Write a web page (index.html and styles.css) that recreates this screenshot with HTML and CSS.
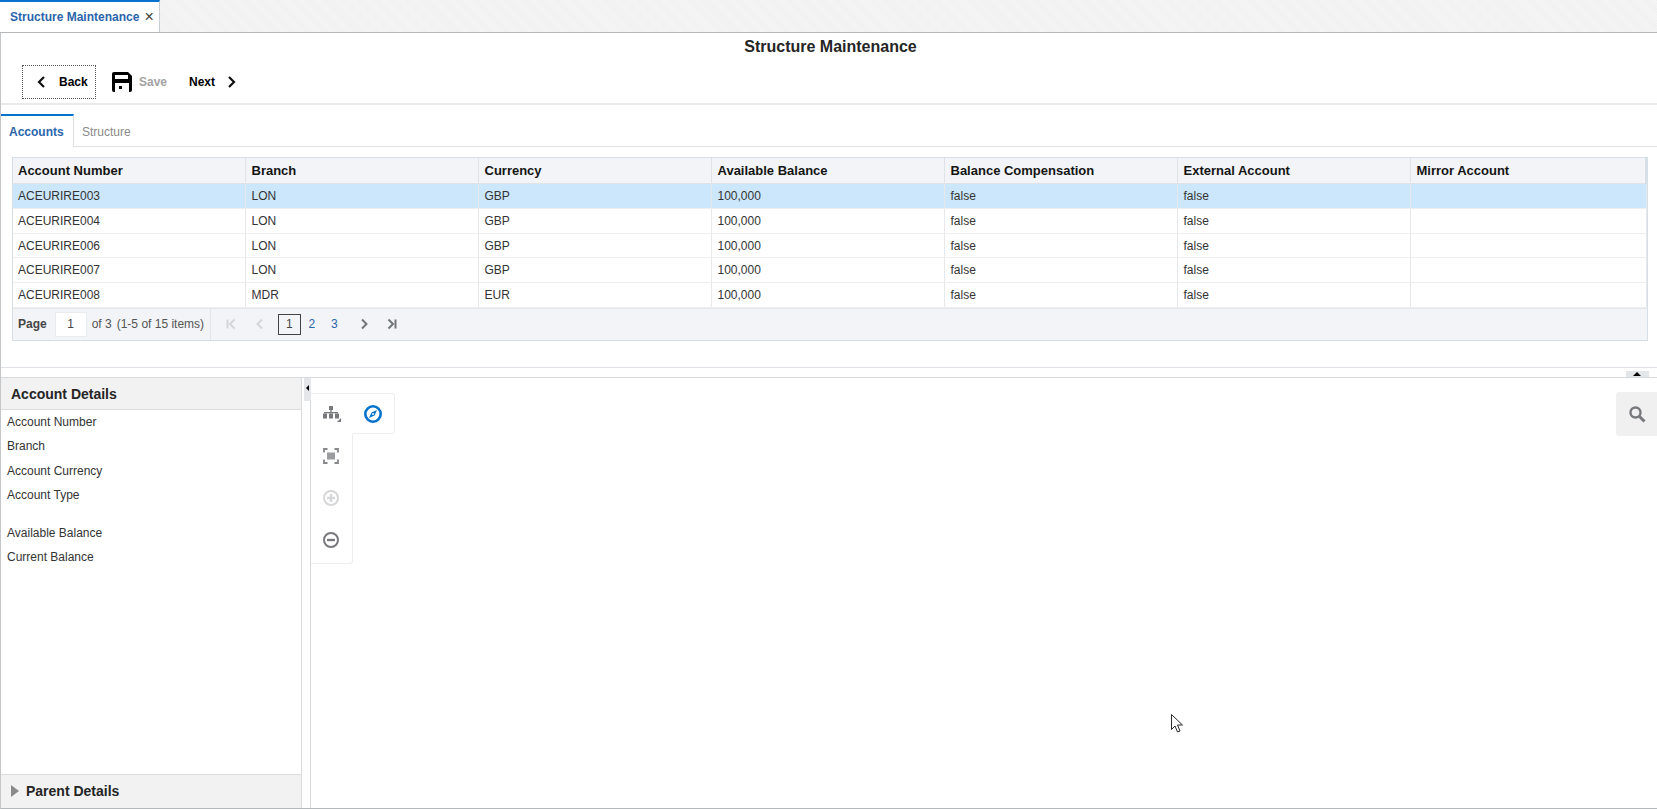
FILE: index.html
```html
<!DOCTYPE html>
<html lang="en">
<head>
<meta charset="utf-8">
<title>Structure Maintenance</title>
<link rel="stylesheet" href="styles.css">
</head>
<body>
<div class="page">
  <header class="tabbar">
    <div class="apptab"><span class="apptab-label">Structure Maintenance</span><span class="apptab-close">×</span></div>
  </header>
  <main class="work">
    <h1 class="title">Structure Maintenance</h1>
    <div class="toolbar">
      <button class="tool tool-back">
        <svg class="chev" viewBox="0 0 10 14"><path d="M8 2 3 7l5 5" /></svg>
        <span>Back</span>
      </button>
      <button class="tool tool-save">
        <svg class="floppy" viewBox="0 0 20 20"><path d="M2 0h14l4 4v14a2 2 0 0 1-2 2H2a2 2 0 0 1-2-2V2a2 2 0 0 1 2-2Z" fill="#000"/><rect x="3" y="3" width="13" height="4" fill="#fff"/><rect x="3" y="11" width="14" height="9" fill="#fff"/><rect x="7" y="14" width="3" height="3" fill="#000"/></svg>
        <span>Save</span>
      </button>
      <button class="tool tool-next">
        <span>Next</span>
        <svg class="chev" viewBox="0 0 10 14"><path d="m2 2 5 5-5 5" /></svg>
      </button>
    </div>
    <nav class="subtabs">
      <div class="subtab active">Accounts</div>
      <div class="subtab">Structure</div>
    </nav>
    <section class="grid-wrap">
      <table class="grid">
        <thead>
          <tr><th>Account Number</th><th>Branch</th><th>Currency</th><th>Available Balance</th><th>Balance Compensation</th><th>External Account</th><th>Mirror Account</th></tr>
        </thead>
        <tbody>
          <tr class="selected"><td>ACEURIRE003</td><td>LON</td><td>GBP</td><td>100,000</td><td>false</td><td>false</td><td></td></tr>
          <tr><td>ACEURIRE004</td><td>LON</td><td>GBP</td><td>100,000</td><td>false</td><td>false</td><td></td></tr>
          <tr class="short"><td>ACEURIRE006</td><td>LON</td><td>GBP</td><td>100,000</td><td>false</td><td>false</td><td></td></tr>
          <tr><td>ACEURIRE007</td><td>LON</td><td>GBP</td><td>100,000</td><td>false</td><td>false</td><td></td></tr>
          <tr><td>ACEURIRE008</td><td>MDR</td><td>EUR</td><td>100,000</td><td>false</td><td>false</td><td></td></tr>
        </tbody>
      </table>
      <div class="pager">
        <div class="pager-info">
          <b>Page</b><span class="page-input">1</span><span>of 3</span><span>(1-5 of 15 items)</span>
        </div>
        <div class="pager-nav">
          <svg class="pg pg-first dim" viewBox="0 0 12 12"><path d="M2.500 1.500v9M9.500 1.500 5 6l4.500 4.500"/></svg>
          <svg class="pg pg-prev dim" viewBox="0 0 12 12"><path d="M8 1.500 3.500 6 8 10.500"/></svg>
          <span class="num current">1</span><span class="num">2</span><span class="num">3</span>
          <svg class="pg pg-next" viewBox="0 0 12 12"><path d="M4 1.500 8.500 6 4 10.500"/></svg>
          <svg class="pg pg-last" viewBox="0 0 12 12"><path d="M2.500 1.500 7 6l-4.500 4.500M9.500 1.500v9"/></svg>
        </div>
      </div>
    </section>
    <div class="hsplit"><span class="hsplit-btn"></span></div>
    <div class="lower">
      <aside class="details">
        <h2 class="details-head">Account Details</h2>
        <div class="details-body">
          <div class="field">Account Number</div>
          <div class="field">Branch</div>
          <div class="field">Account Currency</div>
          <div class="field">Account Type</div>
          <div class="field gap">Available Balance</div>
          <div class="field">Current Balance</div>
        </div>
        <div class="details-foot"><span class="tri"></span>Parent Details</div>
      </aside>
      <div class="vsplit"><span class="vsplit-btn"></span></div>
      <section class="canvas">
        <div class="palette">
          <div class="palette-top">
            <svg class="ic" viewBox="0 0 20 20"><g fill="#77797d"><rect x="8" y="2" width="4" height="4"/><rect x="9.300" y="6" width="1.400" height="2"/><rect x="3" y="8" width="14" height="1.300"/><rect x="2" y="9.500" width="4" height="5"/><rect x="8" y="9.500" width="4" height="5"/><rect x="14" y="9.500" width="4" height="5"/><path d="M20 14v4h-4z"/></g></svg>
            <svg class="ic" viewBox="0 0 20 20"><circle cx="10" cy="10" r="7.700" fill="none" stroke="#0572ce" stroke-width="2.600"/><path d="M14 6 11.500 11.500 6 14 8.500 8.500Z" fill="#0572ce"/><circle cx="10" cy="10" r="1" fill="#fff"/></svg>
          </div>
          <div class="palette-col">
            <svg class="ic" viewBox="0 0 20 20"><path d="M3 6.500V3h3.500M13.500 3H17v3.500M17 13.500V17h-3.500M6.500 17H3v-3.500" fill="none" stroke="#85878b" stroke-width="1.800"/><rect x="6" y="6.500" width="8" height="7" fill="#9a9c9f"/></svg>
            <svg class="ic" viewBox="0 0 20 20"><circle cx="10" cy="10" r="7" fill="none" stroke="#d6d7d9" stroke-width="2"/><path d="M6 10h8M10 6v8" stroke="#d6d7d9" stroke-width="2.400"/></svg>
            <svg class="ic" viewBox="0 0 20 20"><circle cx="10" cy="10" r="7" fill="none" stroke="#77797d" stroke-width="2"/><path d="M6 10h8" stroke="#77797d" stroke-width="2.400"/></svg>
          </div>
        </div>
        <div class="search-btn">
          <svg class="ic" viewBox="0 0 20 20"><circle cx="8.500" cy="8.500" r="5" fill="none" stroke="#77797d" stroke-width="2.400"/><path d="m12.500 12.500 5 5" stroke="#77797d" stroke-width="3"/></svg>
        </div>
        <svg class="cursor" viewBox="0 0 14 22"><path d="M1.500 1.500v15l3.500-3.500 2.500 6 2.500-1-2.500-6h5Z" fill="#fff" stroke="#2b2b2b" stroke-width="1"/></svg>
      </section>
    </div>
  </main>
</div>
</body>
</html>
```

FILE: styles.css
```css
* { box-sizing: border-box; }
html, body { margin: 0; height: 100%; overflow: hidden; background: #fff; }
body { font-family: "Liberation Sans", Arial, sans-serif; font-size: 12px; color: #333; }
.page { width: 1657px; height: 809px; display: flex; flex-direction: column; }

.tabbar { height: 33px; flex: none; display: flex; border-bottom: 1px solid #b5b8ba;
  background: repeating-linear-gradient(45deg, #f5f5f5 0 1px, #f1f1f1 1px 2px); }
.apptab { width: 160px; height: 32px; background: #fff; border-top: 2px solid #0572ce; border-right: 1px solid #c9ced2; display: flex; align-items: center; padding-left: 10px; gap: 5px; }
.apptab-label { font-weight: bold; font-size: 12px; color: #2a65ac; white-space: nowrap; }
.apptab-close { font-size: 16px; color: #444; line-height: 1; }

.work { flex: 1; min-height: 0; display: flex; flex-direction: column; border-left: 1px solid #c4c7c9; border-bottom: 1px solid #b5b8ba; }
.title { margin: 3px 0 0; height: 22px; padding-left: 3px; font-size: 16px; line-height: 21px; font-weight: bold; text-align: center; color: #252525; }
.toolbar { height: 47px; flex: none; display: flex; align-items: flex-start; padding: 7px 0 0 21px; border-bottom: 2px solid #e8eaec; }
.tool { font: bold 12px "Liberation Sans", Arial, sans-serif; background: none; border: 0; padding: 0; display: flex; align-items: center; color: #000; height: 34px; }
.tool-back { width: 74px; border: 1px dotted #555; padding-left: 13px; gap: 13px; }
.tool-save { margin-left: 16px; gap: 7px; color: #a3a3a3; }
.tool-next { margin-left: 22px; gap: 12px; }
.chev { width: 10px; height: 14px; fill: none; stroke: #111; stroke-width: 2.200; }
.floppy { width: 20px; height: 20px; }

.subtabs { margin-top: 9px; height: 33px; flex: none; display: flex; border-bottom: 1px solid #dfe2e5; }
.subtab { padding: 0 8px; font-size: 12px; line-height: 37px; color: #8a8a8a; }
.subtab.active { width: 73px; font-weight: bold; border-top: 2px solid #0572ce; border-right: 1px solid #dfe2e5; height: 33px; line-height: 33px; color: #2a65ac; background: #fff; }

.grid-wrap { margin: 10px 9px 0 11px; height: 184px; flex: none; border: 1px solid #d6dfe6; background: #f2f4f7; display: flex; flex-direction: column; }
.grid { border-collapse: collapse; table-layout: fixed; width: 100%; background: #fff; }
.grid th { height: 25px; width: 233px; padding: 0 0 0 6px; text-align: left; font-size: 13px; font-weight: bold; color: #141414; background: #f2f4f7; border-right: 1px solid #dfe3e8; border-bottom: 1px solid #dfe3e8; }
.grid th:first-child { width: 232px; padding-left: 5px; }
.grid th:last-child { width: auto; border-right: 2px solid #d6dfe6; }
.grid td { height: 25px; padding: 1px 0 0 6px; font-size: 12px; color: #333; border-right: 1px solid #e6e8eb; border-bottom: 1px solid #eceef0; }
.grid td:first-child { padding-left: 5px; }
.grid tr.short td { height: 24px; }
.grid tr.selected td { background: #cce7fb; }
.pager { flex: 1; display: flex; align-items: center; border-top: 1px solid #e4e7ea; font-size: 12px; }
.pager-info { height: 100%; width: 198px; display: flex; align-items: center; padding-left: 5px; border-right: 1px solid #e1e4e8; color: #555; white-space: nowrap; }
.pager-info b { color: #444; }
.page-input { width: 32px; height: 25px; margin: 0 5px 0 8px; background: #fff; border: 1px solid #e9ecef; display: flex; align-items: center; justify-content: center; color: #444; }
.pager-info span:last-child { margin-left: 5px; }
.pager-nav { display: flex; align-items: center; padding-left: 14px; }
.pg { width: 12px; height: 12px; fill: none; stroke: #70757a; stroke-width: 2; }
.pg.dim { stroke: #d3d6d9; }
.pg-prev { margin-left: 17px; }
.num { width: 22.500px; height: 21px; display: flex; align-items: center; justify-content: center; color: #2a65ac; }
.num.current { margin-left: 12px; border: 1px solid #444; color: #444; }
.pg-next { margin-left: 12px; }
.pg-last { margin-left: 16px; }

.hsplit { margin-top: 26px; height: 10px; flex: none; border-top: 1px solid #dfe3e7; display: flex; justify-content: flex-end; padding-right: 8px; }
.hsplit-btn { width: 23px; height: 6px; margin-top: 3px; background: #e3e7ea; position: relative; }
.hsplit-btn::after { content: ""; position: absolute; left: 7px; top: 1px; border: 4px solid transparent; border-top: 0; border-bottom-color: #000; }

.lower { flex: 1; min-height: 0; display: flex; border-top: 1px solid #d6dadd; }
.details { width: 301px; flex: none; display: flex; flex-direction: column; border-right: 1px solid #d9dcdf; }
.details-head { margin: 0; height: 32px; flex: none; padding-left: 10px; font-size: 14px; line-height: 32px; font-weight: bold; color: #252525; background: #f2f2f2; border-bottom: 1px solid #dcdcdc; }
.details-body { flex: 1; padding-top: 0; }
.field { height: 24.300px; padding: 0 0 0 6px; line-height: 24px; color: #333; }
.field.gap { margin-top: 14px; }
.details-foot { height: 34px; flex: none; display: flex; align-items: center; padding: 0 0 2px 10px; font-size: 14px; font-weight: bold; color: #252525; background: #f2f2f2; border-top: 1px solid #dcdcdc; }
.tri { width: 0; height: 0; border: 6.500px solid transparent; border-right: 0; border-left: 8px solid #8a8a8a; margin-right: 7px; }

.vsplit { width: 9px; flex: none; border-right: 1px solid #d6dadd; }
.vsplit-btn { display: block; width: 7px; height: 23px; margin-left: 2px; background: #e3e7ea; position: relative; }
.vsplit-btn::after { content: ""; position: absolute; left: 2px; top: 7px; border: 3.500px solid transparent; border-left: 0; border-right-color: #000; }

.canvas { flex: 1; position: relative; min-width: 0; }
.palette { position: absolute; left: 0; top: 15px; }
.palette-top { width: 84px; height: 41px; display: flex; align-items: center; gap: 22px; padding-left: 10px; background: #fff; border: 1px solid #edeef0; border-left: 0; border-radius: 0 3px 3px 0; }
.palette-col { width: 42px; height: 131px; margin-top: -1px; display: flex; flex-direction: column; gap: 22px; padding: 12px 0 0 10px; background: #fff; border: 1px solid #edeef0; border-top-color: #fff; border-left: 0; border-radius: 0 0 3px 0; }
.ic { width: 20px; height: 20px; flex: none; }
.search-btn { position: absolute; right: 0; top: 14px; width: 41px; height: 44px; background: #f0f0f0; border-radius: 3px 0 0 3px; display: flex; align-items: center; justify-content: center; }
.cursor { position: absolute; left: 859px; top: 335px; width: 14px; height: 22px; }
```
